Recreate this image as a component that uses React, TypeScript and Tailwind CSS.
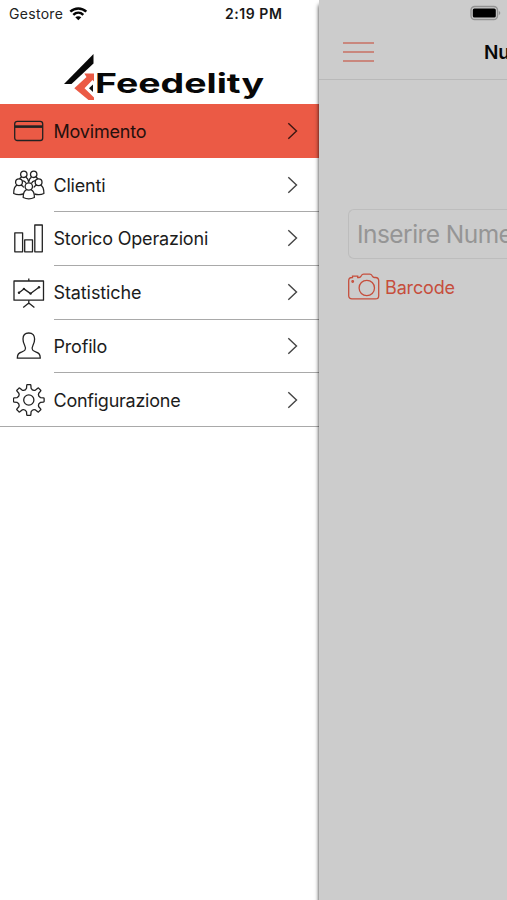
import type { ReactNode } from "react";
import clsx from "clsx";

type MenuItem = {
  id: string;
  label: string;
  icon: ReactNode;
  labelClass: string;
};

function CardIcon() {
  return (
    <g>
      <rect x="1.7" y="6.3" width="28" height="19.2" rx="2.6" />
      <path d="M2 11.600h27.500" strokeWidth="2.600" />
    </g>
  );
}

function PeopleIcon() {
  return (
    <g>
      <circle cx="10.800" cy="5.300" r="3.200" />
      <circle cx="20.700" cy="5.300" r="3.200" />
      <path d="M8.700 8.100c-1.200.5-1.900 1.200-2.200 2M12.900 8.100c1.500.9 2.300 2.300 2.800 4.700.5-2.400 1.300-3.800 2.800-4.700M22.800 8.100c1.200.5 1.900 1.200 2.200 2" />
      <circle cx="6" cy="13.200" r="3.400" />
      <circle cx="25.600" cy="13.200" r="3.400" />
      <path d="M4 16.100C1.700 17.100.7 20 .7 24.500c2.700 1.300 6.200 1.400 9.400.5M8 16.100c1.400.5 2.200 1.300 2.800 2.400M27.600 16.100c2.300 1 3.300 3.900 3.300 8.400-2.700 1.300-6.200 1.400-9.400.5M23.600 16.100c-1.400.5-2.200 1.300-2.800 2.400" />
      <path d="M9.400 11.700c1.900.2 3.200 1.300 3.800 2.800M22.200 11.700c-1.900.2-3.200 1.300-3.800 2.800" />
      <circle cx="15.800" cy="17.500" r="3.700" />
      <path d="M13.600 20.600c-2.500 1.100-3.500 3.600-3.400 7.900 3.500 1.600 7.700 1.600 11.200 0 .1-4.300-.9-6.800-3.400-7.900" />
    </g>
  );
}

function BarsIcon() {
  return (
    <g>
      <rect x="1.800" y="9.800" width="7.800" height="19" />
      <rect x="11.700" y="16.800" width="7.800" height="12" />
      <rect x="21.800" y="2" width="7.500" height="26.800" />
    </g>
  );
}

function BoardIcon() {
  return (
    <g>
      <rect x="1" y="4" width="29.500" height="19.200" />
      <path d="M15.800 1.500V4M15.800 23.200v4M10.200 30.500l5.600-4.500 5.600 4.500" />
      <path d="M6 15.800l4.900-3.900 6.700 4.700 8.400-6.400" />
      <g fill="currentColor" stroke="none">
        <circle cx="6" cy="15.800" r="1.200" />
        <circle cx="10.900" cy="11.900" r="1.200" />
        <circle cx="17.600" cy="16.600" r="1.200" />
        <circle cx="26" cy="10.200" r="1.200" />
      </g>
    </g>
  );
}

function PersonIcon() {
  return (
    <path d="M15.800 3c-3.900 0-5.800 2.400-5.800 6 0 2.800.6 4.500 1.600 6.300.9 1.700 1.200 3.500.4 4.700-.6.900-1.600 1.300-3.100 1.900-3.400 1.200-4.400 2.300-4.600 6.300h23c-.2-4-1.200-5.100-4.600-6.300-1.500-.6-2.500-1-3.100-1.900-.8-1.200-.5-3 .4-4.700 1-1.800 1.600-3.500 1.600-6.300 0-3.600-1.900-6-5.800-6Z" />
  );
}

// Eight teeth around the centre, with rounded valleys between them
function GearIcon() {
  const at = (deg: number, radius: number) => {
    const angle = (deg * Math.PI) / 180;
    return `${(15.8 + radius * Math.cos(angle)).toFixed(2)} ${(16 + radius * Math.sin(angle)).toFixed(2)}`;
  };
  let d = "";
  for (let i = 0; i < 8; i++) {
    const base = i * 45 - 90;
    d += `${i === 0 ? "M" : "L"}${at(base - 8, 14.8)}`;
    d += `Q${at(base - 7.5, 15.4)} ${at(base - 5.5, 15.4)}L${at(base + 5.5, 15.4)}Q${at(base + 7.500, 15.4)} ${at(base + 8, 14.8)}`;
    d += `L${at(base + 11, 12)}Q${at(base + 22.5, 9.6)} ${at(base + 34, 12)}`;
  }
  return (
    <g>
      <path d={`${d}Z`} />
      <circle cx="15.800" cy="16" r="5.100" />
    </g>
  );
}

const MENU_ITEMS: MenuItem[] = [
  { id: "movimento", label: "Movimento", icon: <CardIcon />, labelClass: "tracking-[-0.200px]" },
  { id: "clienti", label: "Clienti", icon: <PeopleIcon />, labelClass: "tracking-[-0.200px]" },
  { id: "storico", label: "Storico Operazioni", icon: <BarsIcon />, labelClass: "tracking-[-0.180px]" },
  { id: "statistiche", label: "Statistiche", icon: <BoardIcon />, labelClass: "tracking-[-0.100px]" },
  { id: "profilo", label: "Profilo", icon: <PersonIcon />, labelClass: "tracking-[-0.200px]" },
  { id: "configurazione", label: "Configurazione", icon: <GearIcon />, labelClass: "tracking-[-0.250px]" },
];

function Logo() {
  return (
    <svg className="block h-[52px] w-[206px]" viewBox="0 0 206 52" role="img">
      <path d="M33.500 1v9.500L11.500 31H4Z" fill="#080808" />
      <path d="M24.300 20.500h9.700v8l-1.500-1.500-8 8.200 9.500 9.300v2.500h-5.500L14.300 35.200 26.500 24Z" fill="#eb5a45" />
      <path d="M33 31.500v7.500l-4-3.800Z" fill="#111" />
      <text
        x="35"
        y="39.500"
        textLength="169"
        lengthAdjust="spacingAndGlyphs"
        fill="#080808"
        className="font-['Inter'] text-[27px] font-bold"
      >
        Feedelity
      </text>
    </svg>
  );
}

function WifiIcon() {
  return (
    <svg className="block h-[14px] w-[20px]" viewBox="0 0 20 14" fill="none" stroke="#050505" strokeWidth="2.500">
      <path d="M1.300 4.700c4.600-4.300 11.400-4.300 16 0" />
      <path d="M4.300 7.800c3-2.800 7-2.800 10 0" />
      <path d="M9.300 13.300l-3-3c1.700-1.500 4.300-1.500 6 0Z" fill="#050505" stroke="none" />
    </svg>
  );
}

function MenuRow({ item, active, last }: { item: MenuItem; active: boolean; last: boolean }) {
  return (
    <li className={clsx("flex h-[53.800px] items-stretch", active && "bg-[#eb5a45]", last && "border-b border-[#a9a9a9]")}>
      <div className="flex w-[53.500px] shrink-0 items-center pl-[12.500px]">
        <svg
          className="h-8 w-8 text-[#222]"
          viewBox="0 0 32 32"
          fill="none"
          stroke="currentColor"
          strokeWidth="1.300"
          strokeLinejoin="round"
        >
          {item.icon}
        </svg>
      </div>
      <div
        className={clsx(
          "flex flex-1 items-center justify-between pr-[21px]",
          !active && !last && "border-b border-[#a9a9a9]",
        )}
      >
        <span
          className={clsx(
            "pt-[2px] text-[18px] leading-6 whitespace-nowrap",
            active ? "text-[#25100d]" : "text-[#1c1c1c]",
            item.labelClass,
          )}
        >
          {item.label}
        </span>
        <svg className="h-[18px] w-[11px]" viewBox="0 0 11 18" fill="none" stroke={active ? "#3b1712" : "#444"} strokeWidth="1.400">
          <path d="M1.300 1.200 9.500 9l-8.200 7.800" />
        </svg>
      </div>
    </li>
  );
}

function SideMenu() {
  return (
    <aside className="flex w-[319px] shrink-0 flex-col bg-white">
      <div className="flex h-7 items-center pb-px pl-[9px] text-[14px] text-[#222]">
        <span className="w-[60px] tracking-[0.300px]">Gestore</span>
        <WifiIcon />
        <span className="ml-[136px] font-semibold tracking-[0.550px] whitespace-nowrap text-[#181818]">2:19 PM</span>
      </div>
      <div className="flex h-[76.400px] items-start pt-[25px] pl-[60px]">
        <Logo />
      </div>
      <ul>
        {MENU_ITEMS.map((item, index) => (
          <MenuRow key={item.id} item={item} active={index === 0} last={index === MENU_ITEMS.length - 1} />
        ))}
      </ul>
    </aside>
  );
}

function MainPage() {
  return (
    <main className="relative flex w-[188px] shrink-0 flex-col bg-[#cccccc] shadow-[0_5px_4px_rgba(0,0,0,0.850)]">
      <div className="flex h-7 items-center pb-[2px] pl-[151px]">
        <svg className="h-4 w-8" viewBox="0 0 32 16">
          <rect x="1" y="1.500" width="26.500" height="13" rx="3.800" fill="#cccccc" stroke="#929292" strokeWidth="1.400" />
          <rect x="2.800" y="3.500" width="23" height="9" rx="1.600" fill="#000" />
          <path d="M28.800 6v4c2-.8 2-3.200 0-4Z" fill="#929292" />
        </svg>
      </div>
      <header className="flex h-[52px] items-center justify-between border-b border-[#b9b9b9] pl-6">
        <button type="button" className="mb-[3px] flex w-[31px] flex-col gap-[7px]">
          <span className="h-[2px] w-full bg-[#c9877d]" />
          <span className="h-[2px] w-full bg-[#c9877d]" />
          <span className="h-[2px] w-full bg-[#c9877d]" />
        </button>
        <h1 className="w-[23px] text-[19px] font-semibold tracking-[-0.300px] whitespace-nowrap text-[#080808]">Nu</h1>
      </header>
      <div className="flex flex-col pt-[129px] pl-[29px]">
        <div className="flex h-[50px] items-center rounded-l-md border border-r-0 border-[#bdbdbd] pt-px pl-2 text-[24.500px] tracking-[-0.550px] whitespace-nowrap text-[#959595]">
          Inserire Nume
        </div>
        <div className="mt-3 flex h-8 items-center gap-[5px] text-[#c64e3c]">
          <svg className="h-8 w-8" viewBox="0 0 32 32" fill="none" stroke="currentColor" strokeWidth="1.300">
            <path d="M4.500 6.500V5.200h5.200v1.300h1.500c1.300 0 1.600-1.100 2.200-2 .5-.9 1.200-1.300 2.200-1.300h6.200c1 0 1.700.4 2.200 1.300.6.900.9 2 2.200 2h1.300c2.200 0 3.200 1.200 3.200 3.200v15c0 2-1.100 3.200-3.200 3.200H4c-2.100 0-3.300-1.200-3.300-3.200v-15c0-2 1.200-3.200 3.300-3.200Z" />
            <circle cx="18.800" cy="17" r="7.700" />
            <circle cx="4.700" cy="10.500" r=".8" />
          </svg>
          <span className="text-[18px] tracking-[-0.150px]">Barcode</span>
        </div>
      </div>
    </main>
  );
}

export default function App() {
  return (
    <div className="flex h-[900px] w-[507px] overflow-hidden bg-white font-['Inter',sans-serif]">
      <SideMenu />
      <MainPage />
    </div>
  );
}
